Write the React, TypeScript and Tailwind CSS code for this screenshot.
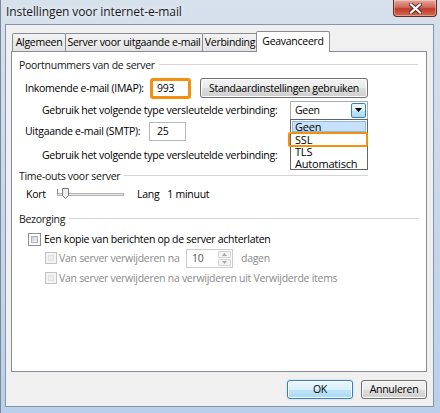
import React from 'react'

// Win7-style "Instellingen voor internet-e-mail" dialog, tab "Geavanceerd"

const BTN =
  'border border-[#707070] rounded-[3px] bg-[linear-gradient(to_bottom,#f2f2f2_0%,#ebebeb_50%,#dddddd_51%,#cfcfcf_100%)] shadow-[inset_0_0_0_1px_#fcfcfc]'

function GroupHeader({ label, lineEnd }: { label: string; lineEnd: string }) {
  return (
    <div className={`flex items-center h-[14px] pl-[7px] ${lineEnd}`}>
      <span className="text-[#151515]">{label}</span>
      <div className="flex-1 ml-[4px] h-[2px] border-t border-[#d5d5d5] border-b border-b-white" />
    </div>
  )
}

function CheckBox({ disabled }: { disabled?: boolean }) {
  return (
    <div
      className={
        disabled
          ? 'w-[12px] h-[12px] shrink-0 border border-[#c3c3c3] bg-[#f4f4f4] p-[2px]'
          : 'w-[13px] h-[13px] shrink-0 border border-[#8e8f8f] bg-white p-[2px]'
      }
    >
      <div
        className={
          disabled
            ? 'w-full h-full border border-[#dedede] bg-[#ececec]'
            : 'w-full h-full border border-[#aeb3b9] bg-[linear-gradient(135deg,#cbcfd5,#f6f6f6)]'
        }
      />
    </div>
  )
}

function Tab({ label, active, className }: { label: string; active?: boolean; className: string }) {
  return active ? (
    <div
      className={`relative z-10 h-[21px] -mb-px flex items-start justify-center pt-[4px] bg-white border border-b-0 border-[#898c95] rounded-t-[2px] ${className}`}
    >
      {label}
    </div>
  ) : (
    <div
      className={`h-[18px] flex items-center justify-center border border-b-0 border-[#898c95] rounded-t-[2px] bg-[linear-gradient(to_bottom,#f3f3f3,#e3e3e3)] ${className}`}
    >
      {label}
    </div>
  )
}

export default function App() {
  return (
    <div className="w-[440px] h-[413px] flex flex-col overflow-hidden whitespace-nowrap border-l border-[#7c8898] bg-[linear-gradient(to_bottom,#d7e1ec_0%,#cbd9e9_40%,#b9d0ea_100%)] font-['Open_Sans',sans-serif] text-[10.5px] tracking-[-0.28px] text-black leading-none">
      {/* title bar */}
      <div className="relative h-[24px] shrink-0 flex items-center pl-[5px]">
        <span className="text-[12px] tracking-[-0.1px] text-[#1b1b1b] [text-shadow:0_0_6px_#ffffff]">Instellingen voor internet-e-mail</span>
        <div className="absolute top-0 right-[3px] w-[44px] h-[17px] rounded-b-[4px] border border-t-0 border-[#5e2a24] bg-[linear-gradient(to_bottom,#e6a89c_0%,#d0685c_45%,#c1392b_55%,#d66c4c_100%)] shadow-[inset_0_0_0_1px_rgba(255,255,255,0.35)] flex items-center justify-center">
          <svg width="13" height="11" viewBox="0 0 13 11">
            <path d="M2 1.5 L11 9.5 M11 1.5 L2 9.5" stroke="#4a2a27" strokeWidth="4" strokeLinecap="square" />
            <path d="M2 1.5 L11 9.5 M11 1.5 L2 9.5" stroke="#ffffff" strokeWidth="2.2" strokeLinecap="square" />
          </svg>
        </div>
      </div>

      {/* client area */}
      <div className="flex-1 ml-[4px] mr-[6px] mb-[6px] flex flex-col border border-[#8297ae] bg-[#f0f0f0] px-[5px] pt-[6px]">
        {/* tab strip */}
        <div className="flex items-end h-[20px] pl-[1px]">
          <Tab label="Algemeen" className="w-[54px]" />
          <Tab label="Server voor uitgaande e-mail" className="w-[138px] -ml-px" />
          <Tab label="Verbinding" className="w-[56px] -ml-px" />
          <Tab label="Geavanceerd" active className="w-[74px] -ml-[2px]" />
        </div>

        {/* tab panel */}
        <div className="relative w-[416px] h-[321px] border border-[#898c95] bg-white">
          <div className="pt-[6px]">
            <GroupHeader label="Poortnummers van de server" lineEnd="pr-[8px]" />

            <div className="flex items-center h-[20px] mt-[6px] pl-[13px]">
              <span className="w-[125px]">Inkomende e-mail (IMAP):</span>
              <div className="w-[41px] h-[21px] border-[3px] border-[#f5900f] rounded-[3px] flex items-center pl-[4px]">993</div>
              <button className={`ml-[9px] w-[168px] h-[20px] flex items-center justify-center ${BTN}`}>
                Standaardinstellingen gebruiken
              </button>
            </div>

            <div className="flex items-center h-[20px] mt-[2px] pl-[30px]">
              <span className="w-[248px]">Gebruik het volgende type versleutelde verbinding:</span>
              <div className="w-[78px] h-[19px] border border-[#a5acb5] flex items-center justify-between pl-[4px] pr-[1px]">
                <span>Geen</span>
                <div className="w-[15px] h-[15px] border border-[#3c7fb1] rounded-[2px] bg-[linear-gradient(to_bottom,#eaf6fd_0%,#d9f0fc_50%,#bee6fd_51%,#a7d9f5_100%)] flex items-center justify-center">
                  <svg width="7" height="4" viewBox="0 0 7 4">
                    <path d="M0 0 H7 L3.5 4 Z" fill="#000" />
                  </svg>
                </div>
              </div>
            </div>

            <div className="flex items-center h-[20px] mt-[1px] pl-[13px]">
              <span className="w-[124px]">Uitgaande e-mail (SMTP):</span>
              <div className="w-[37px] h-[19px] border border-[#b5b9c1] flex items-center pl-[7px]">25</div>
            </div>

            <div className="flex items-center h-[20px] mt-[4px] pl-[30px]">
              <span className="w-[248px]">Gebruik het volgende type versleutelde verbinding:</span>
              <div className="w-[78px] h-[19px] border border-[#a5acb5]" />
            </div>

            <div className="mt-[4px]">
              <GroupHeader label="Time-outs voor server" lineEnd="pr-[58px]" />
            </div>

            <div className="flex items-center h-[16px] mt-[3px] pl-[14px]">
              <span className="w-[31px]">Kort</span>
              <div className="relative w-[67px] h-[16px]">
                <div className="absolute left-0 right-0 top-[7px] h-[3px] border border-[#b2b2b2] bg-[#e8e8e8]" />
                <div className="absolute left-0 top-[3px] w-px h-[5px] bg-[#8a8a8a]" />
                <svg className="absolute left-[5px] top-[2px]" width="7" height="11" viewBox="0 0 7 11">
                  <path d="M0.5 0.5 H6.5 V7.5 L3.5 10.5 L0.5 7.5 Z" fill="#ececec" stroke="#7a7a7a" />
                </svg>
              </div>
              <span className="ml-[13px]">Lang</span>
              <span className="ml-[8px]">1 minuut</span>
            </div>

            <div className="mt-[10px]">
              <GroupHeader label="Bezorging" lineEnd="pr-[8px]" />
            </div>

            <div className="flex items-center h-[16px] mt-[5px] pl-[16px] gap-[3px]">
              <CheckBox />
              <span>Een kopie van berichten op de server achterlaten</span>
            </div>

            <div className="flex items-center h-[20px] mt-[1px] pl-[33px]">
              <CheckBox disabled />
              <span className="w-[129px] pl-[2px] text-[#8a8a8a]">Van server verwijderen na</span>
              <div className="w-[47px] h-[19px] border border-[#c9ccd1] flex items-center justify-between pl-[5px] pr-[1px] text-[#555555]">
                <span>10</span>
                <div className="w-[13px] h-[15px] flex flex-col gap-px">
                  <div className="flex-1 border border-[#d3d3d3] rounded-[1px] bg-[#f4f4f4] flex items-center justify-center">
                    <svg width="5" height="3" viewBox="0 0 5 3"><path d="M0 3 H5 L2.5 0 Z" fill="#a8a8a8" /></svg>
                  </div>
                  <div className="flex-1 border border-[#d3d3d3] rounded-[1px] bg-[#f4f4f4] flex items-center justify-center">
                    <svg width="5" height="3" viewBox="0 0 5 3"><path d="M0 0 H5 L2.5 3 Z" fill="#a8a8a8" /></svg>
                  </div>
                </div>
              </div>
              <span className="ml-[8px] text-[#8a8a8a]">dagen</span>
            </div>

            <div className="flex items-center h-[16px] mt-[2px] pl-[33px]">
              <CheckBox disabled />
              <span className="pl-[2px] text-[#8a8a8a]">Van server verwijderen na verwijderen uit Verwijderde items</span>
            </div>
          </div>

          {/* open encryption list over the second combo */}
          <div className="absolute left-[278px] top-[67px] w-[78px] h-[51px] border border-[#646464] bg-white pt-px px-px text-[11px] tracking-[-0.2px]">
            <div className="h-[11px] flex items-center pl-[2px] bg-[#c6e2fa] border border-[#90b9e4]">Geen</div>
            <div className="h-[12px] flex items-center pl-[3px] mt-[1px]">SSL</div>
            <div className="h-[12px] flex items-center pl-[3px]">TLS</div>
            <div className="h-[12px] flex items-center pl-[3px]">Automatisch</div>
          </div>
          <div className="absolute left-[276px] top-[80px] w-[80px] h-[15px] border-2 border-[#f5900f] rounded-[2px]" />
        </div>

        {/* dialog buttons */}
        <div className="flex justify-end gap-[8px] mt-[8px] pr-[1px]">
          <button className="w-[66px] h-[19px] rounded-[3px] border border-[#3c7fb1] bg-[linear-gradient(to_bottom,#eaf6fd_0%,#d9f0fc_50%,#bee6fd_51%,#a7d9f5_100%)] shadow-[inset_0_0_0_1px_#ffffff,0_0_2px_#9fd2f5]">
            OK
          </button>
          <button className={`w-[66px] h-[19px] ${BTN}`}>Annuleren</button>
        </div>
      </div>
    </div>
  )
}
